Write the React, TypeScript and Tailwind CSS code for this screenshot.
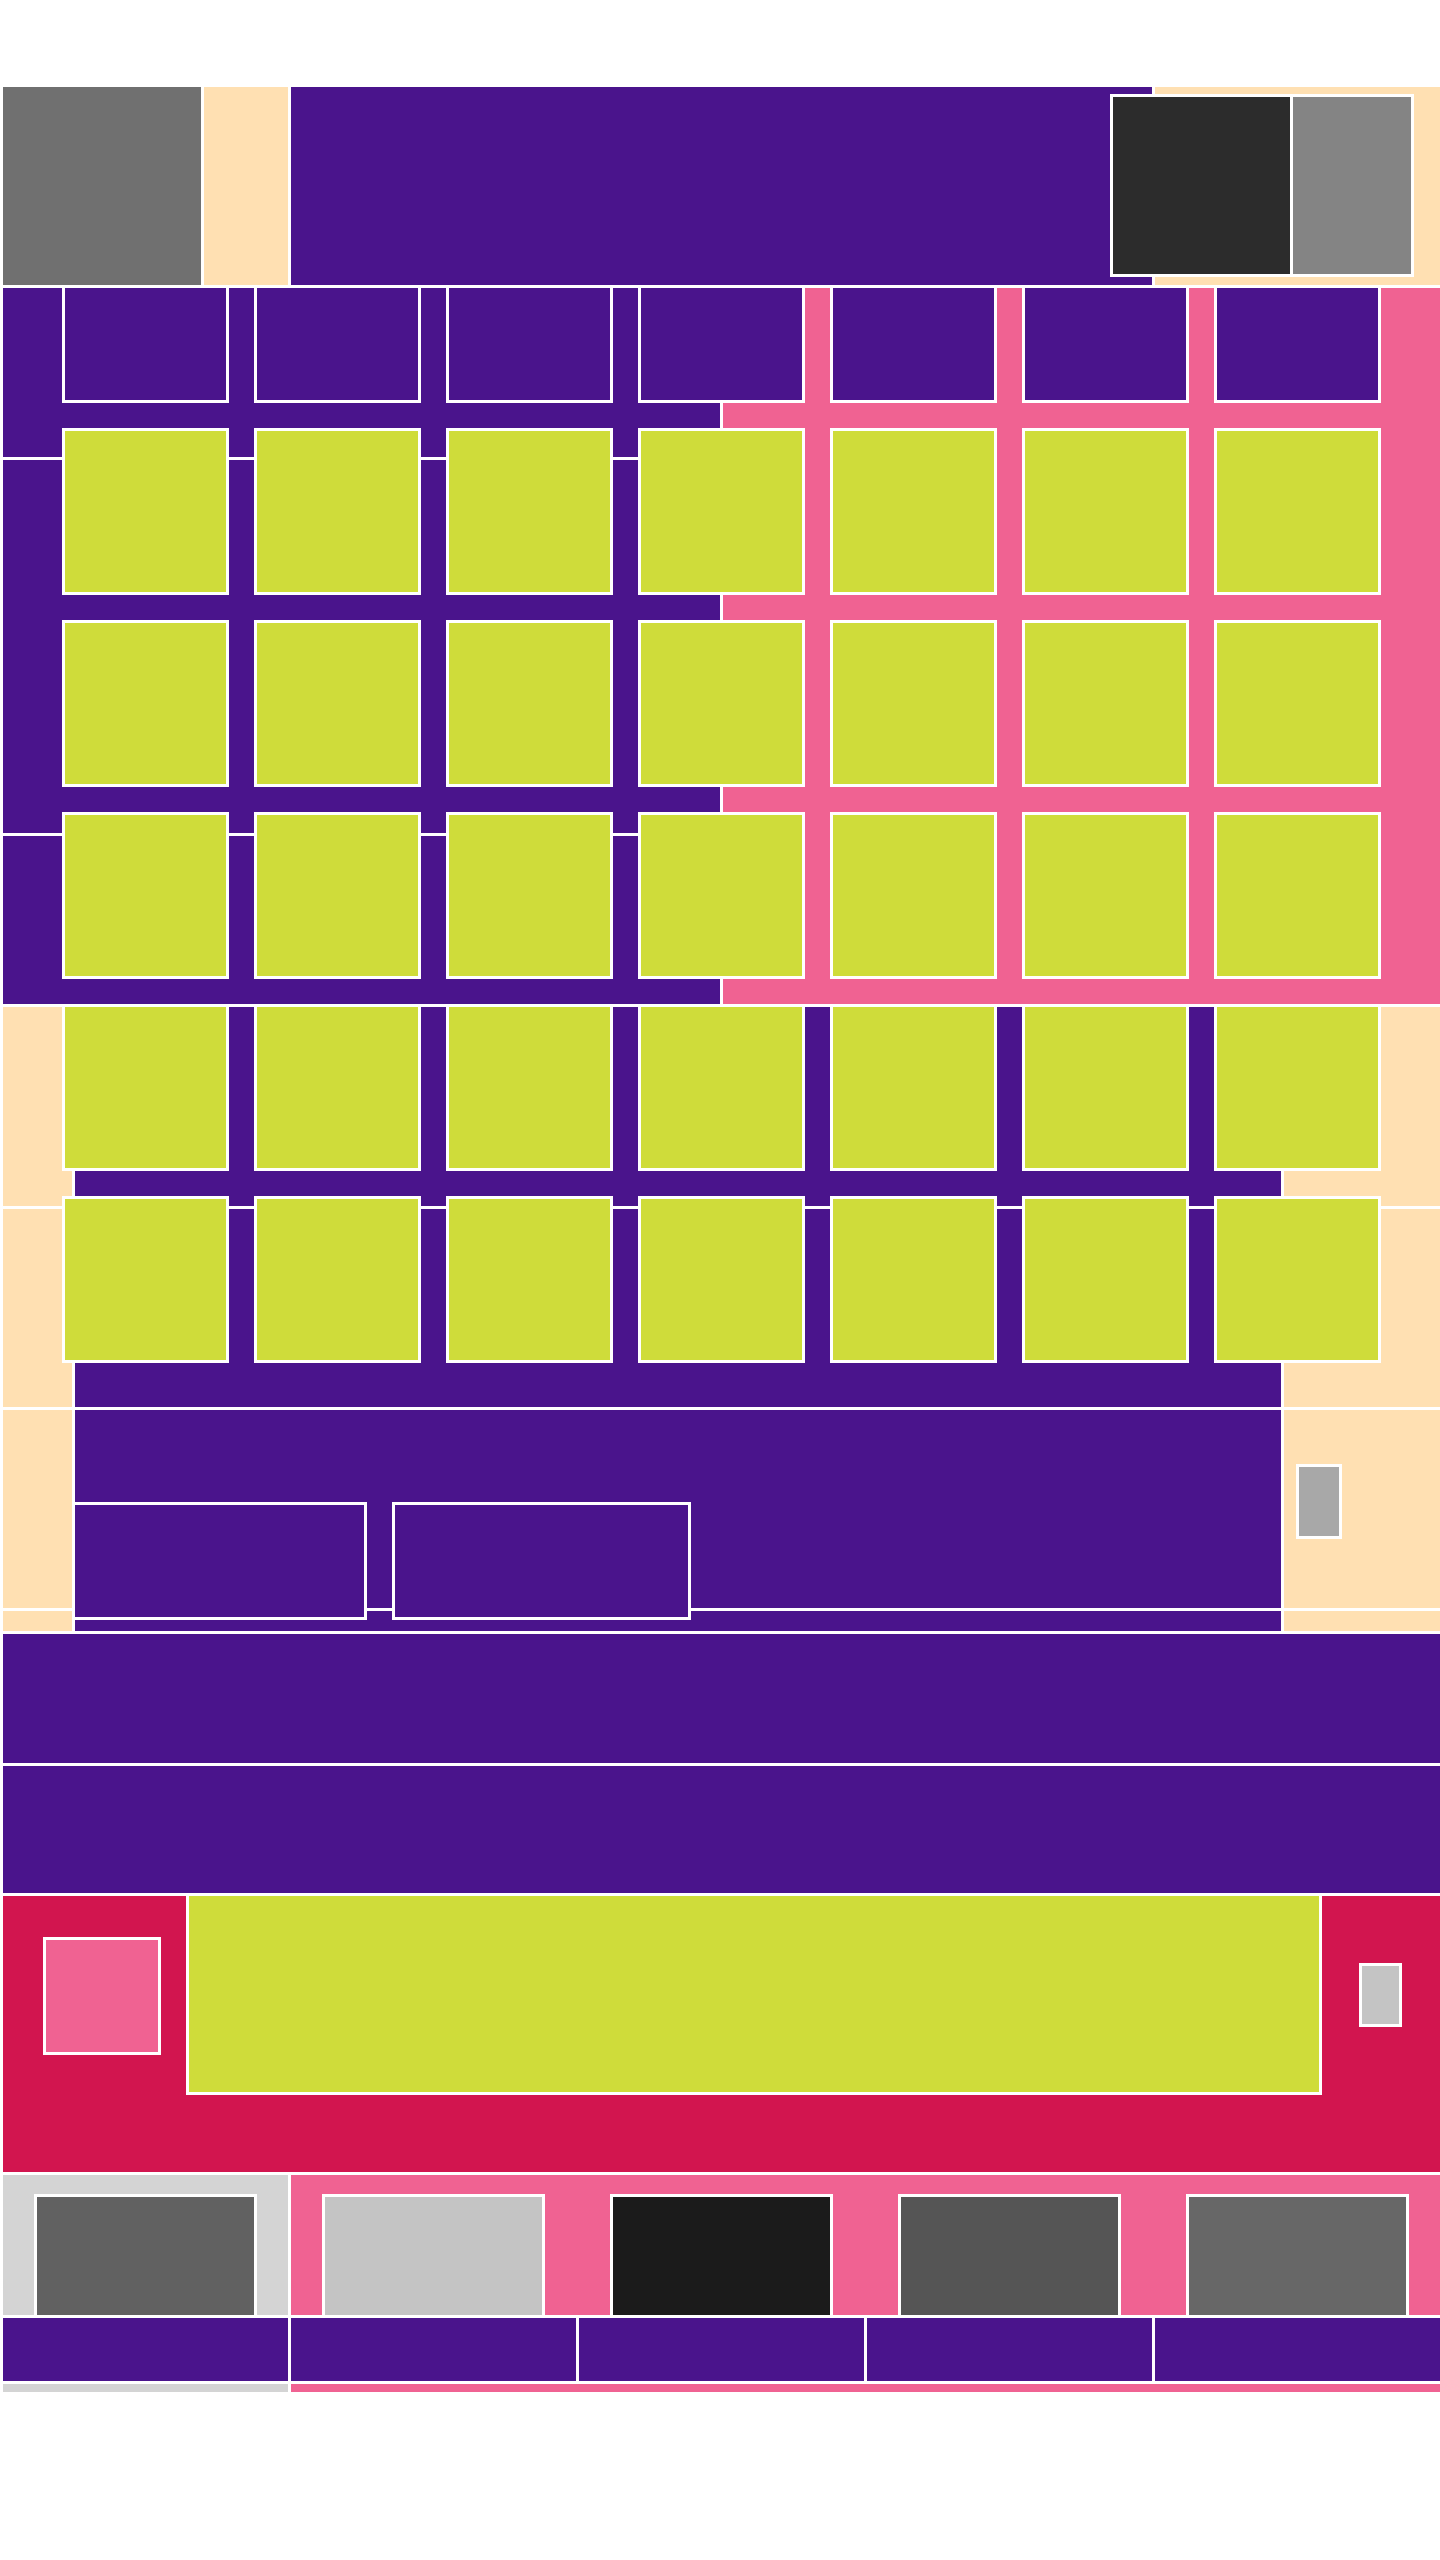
import React from "react";

const PURPLE = "bg-[#4A148C]";
const PEACH = "bg-[#FFE0B2]";

function GridOverlay() {
  const rows = 6;
  const cols = 7;
  const cells: React.ReactNode[] = [];
  for (let r = 0; r < rows; r++) {
    for (let c = 0; c < cols; c++) {
      cells.push(
        <div
          key={`${r}-${c}`}
          className={
            r === 0
              ? "border-[3px] border-white bg-[#4A148C]"
              : "border-[3px] border-white bg-[#CFDC3A]"
          }
        />
      );
    }
  }
  return (
    <div className="absolute left-[59px] top-[198px] grid grid-cols-[repeat(7,167px)] grid-rows-[118px_repeat(5,167px)] gap-[25px]">
      {cells}
    </div>
  );
}

export default function App() {
  return (
    <div className="w-[1440px] min-h-[2560px] bg-white pt-[87px]">
      <div className="relative ml-[3px] flex w-[1437px] flex-col gap-[3px]">
        {/* Header */}
        <div className="relative flex h-[198px] gap-[3px]">
          <div className="w-[198px] bg-[#707070]" />
          <div className={`w-[84px] ${PEACH}`} />
          <div className={`w-[861px] ${PURPLE}`} />
          <div className={`flex-1 ${PEACH}`} />
          <div className="absolute left-[1107px] top-[7px] flex gap-[3px] border-[3px] border-white bg-white">
            <div className="h-[177px] w-[177px] bg-[#2C2C2C]" />
            <div className="h-[177px] w-[118px] bg-[#848484]" />
          </div>
        </div>

        {/* Calendar body background */}
        <div className="flex h-[716px] gap-[3px]">
          <div className="flex w-[717px] flex-col gap-[3px]">
            <div className={`h-[169px] ${PURPLE}`} />
            <div className={`h-[373px] ${PURPLE}`} />
            <div className={`flex-1 ${PURPLE}`} />
          </div>
          <div className="flex-1 bg-[#F06292]" />
        </div>

        {/* Three-column band */}
        <div className="flex h-[624px] gap-[3px]">
          <div className="flex w-[69px] flex-col gap-[3px]">
            <div className={`h-[199px] ${PEACH}`} />
            <div className={`h-[198px] ${PEACH}`} />
            <div className={`h-[198px] ${PEACH}`} />
            <div className={`flex-1 ${PEACH}`} />
          </div>
          <div className="relative flex w-[1206px] flex-col gap-[3px]">
            <div className={`h-[199px] ${PURPLE}`} />
            <div className={`h-[198px] ${PURPLE}`} />
            <div className={`h-[198px] ${PURPLE}`} />
            <div className={`flex-1 ${PURPLE}`} />
            <div className="absolute left-[-3px] top-[495px] h-[118px] w-[295px] border-[3px] border-white bg-[#4A148C]" />
            <div className="absolute left-[317px] top-[495px] h-[118px] w-[299px] border-[3px] border-white bg-[#4A148C]" />
          </div>
          <div className="flex flex-1 flex-col gap-[3px]">
            <div className={`h-[199px] ${PEACH}`} />
            <div className={`h-[198px] ${PEACH}`} />
            <div className={`h-[198px] pl-[12px] pt-[54px] ${PEACH}`}>
              <div className="h-[75px] w-[46px] border-[3px] border-white bg-[#A8A8A8]" />
            </div>
            <div className={`flex-1 ${PEACH}`} />
          </div>
        </div>

        {/* Purple bands */}
        <div className={`h-[129px] ${PURPLE}`} />
        <div className={`h-[127px] ${PURPLE}`} />

        {/* Crimson section */}
        <div className="flex h-[276px] items-start bg-[#D2154F]">
          <div className="ml-[40px] mt-[41px] h-[118px] w-[118px] border-[3px] border-white bg-[#F06292]" />
          <div className="ml-[25px] h-[199px] w-[1136px] border-x-[3px] border-b-[3px] border-white bg-[#CFDC3A]" />
          <div className="ml-[37px] mt-[67px] h-[64px] w-[43px] border-[3px] border-white bg-[#C4C4C4]" />
        </div>

        {/* Thumbnails row */}
        <div className="flex h-[140px] gap-[3px]">
          <div className="w-[285px] bg-[#D4D4D4] pl-[31px] pt-[19px]">
            <div className="h-[121px] w-[223px] border-x-[3px] border-t-[3px] border-white bg-[#616161]" />
          </div>
          <div className="flex flex-1 gap-[65px] bg-[#F06292] pl-[31px] pt-[19px]">
            <div className="h-[121px] w-[223px] border-x-[3px] border-t-[3px] border-white bg-[#C4C4C4]" />
            <div className="h-[121px] w-[223px] border-x-[3px] border-t-[3px] border-white bg-[#1B1B1B]" />
            <div className="h-[121px] w-[223px] border-x-[3px] border-t-[3px] border-white bg-[#555555]" />
            <div className="h-[121px] w-[223px] border-x-[3px] border-t-[3px] border-white bg-[#676767]" />
          </div>
        </div>

        {/* Purple cells */}
        <div className="flex h-[63px] gap-[3px]">
          <div className={`w-[285px] ${PURPLE}`} />
          <div className={`w-[285px] ${PURPLE}`} />
          <div className={`w-[285px] ${PURPLE}`} />
          <div className={`w-[285px] ${PURPLE}`} />
          <div className={`flex-1 ${PURPLE}`} />
        </div>

        {/* Bottom strip */}
        <div className="flex h-[8px] gap-[3px]">
          <div className="w-[285px] bg-[#D4D4D4]" />
          <div className="flex-1 bg-[#F06292]" />
        </div>

        <GridOverlay />
      </div>
    </div>
  );
}
